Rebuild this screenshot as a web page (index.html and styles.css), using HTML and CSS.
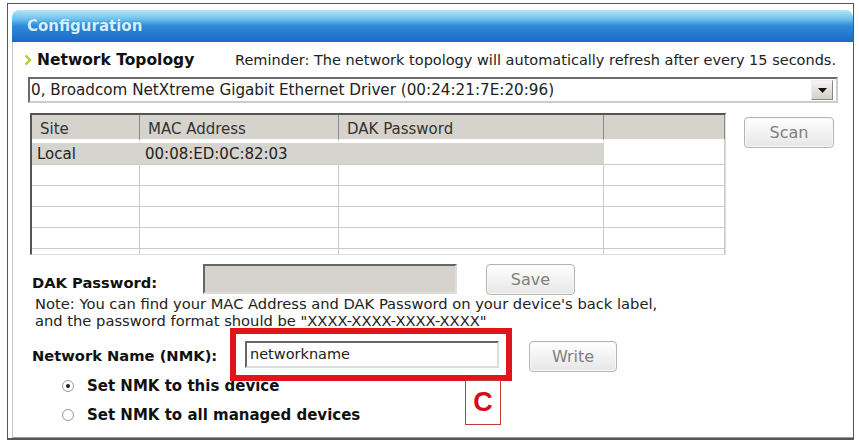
FILE: index.html
```html
<!DOCTYPE html>
<html lang="en">
<head>
    <meta charset="UTF-8">
    <title>Configuration</title>
    <link rel="stylesheet" href="styles.css">
</head>
<body>
<div class="window">
    <div class="titlebar">Configuration</div>
    <div class="panel">
        <div class="topology">
            <h2 class="section">
                <svg width="8" height="12" viewBox="0 0 8 12" class="chevron">
                    <polyline points="1.5,1.5 6,6 1.5,10.5" fill="none" stroke="#b9c935" stroke-width="2.4"/>
                </svg>
                Network Topology
            </h2>
            <span class="reminder">Reminder: The network topology will automatically refresh after every 15 seconds.</span>
        </div>

        <div class="select">
            <span>0, Broadcom NetXtreme Gigabit Ethernet Driver (00:24:21:7E:20:96)</span>
            <span class="select-arrow">
                <svg width="9" height="5" viewBox="0 0 9 5"><polygon points="0,0 9,0 4.5,5" fill="#111"/></svg>
            </span>
        </div>

        <div class="devices">
            <div class="grid">
                <div class="th">Site</div>
                <div class="th">MAC Address</div>
                <div class="th">DAK Password</div>
                <div class="th"></div>

                <div class="td sel">Local</div>
                <div class="td sel">00:08:ED:0C:82:03</div>
                <div class="td sel"></div>
                <div class="td"></div>

                <div class="td"></div><div class="td"></div><div class="td"></div><div class="td"></div>
                <div class="td"></div><div class="td"></div><div class="td"></div><div class="td"></div>
                <div class="td"></div><div class="td"></div><div class="td"></div><div class="td"></div>
                <div class="td"></div><div class="td"></div><div class="td"></div><div class="td"></div>
                <div class="td short"></div><div class="td short"></div><div class="td short"></div><div class="td short"></div>
            </div>
            <button class="btn scan">Scan</button>
        </div>

        <div class="dak-row">
            <label class="field-label">DAK Password:</label>
            <div class="input disabled"></div>
            <button class="btn save">Save</button>
        </div>
        <p class="note">Note: You can find your MAC Address and DAK Password on your device's back label,<br>
            and the password format should be "XXXX-XXXX-XXXX-XXXX"</p>

        <div class="nmk-row">
            <label class="field-label">Network Name (NMK):</label>
            <div class="highlight">
                <div class="input">networkname</div>
                <span class="callout">C</span>
            </div>
            <button class="btn write">Write</button>
        </div>

        <div class="radios">
            <label class="radio"><span class="dot checked"></span>Set NMK to this device</label>
            <label class="radio"><span class="dot"></span>Set NMK to all managed devices</label>
        </div>
    </div>
</div>
</body>
</html>
```

FILE: styles.css
```css
body {
    margin: 0;
    padding: 3px 0 0 7px;
    background: #fff;
    font: 14.5px "DejaVu Sans", sans-serif;
    color: #222;
}

.window {
    box-sizing: border-box;
    width: 847px;
    height: 437px;
    border: 1px solid #555;
    border-bottom-width: 2px;
    padding: 6px 0 0 4px;
    display: flex;
    flex-direction: column;
}

.titlebar {
    height: 32px;
    line-height: 32px;
    padding-left: 15px;
    border-radius: 7px 7px 0 0;
    background: linear-gradient(#b4e6f7 0%, #6fc2ee 28%, #2f8ad8 50%, #1b6ac6 100%);
    color: #d6efff;
    font-weight: bold;
    font-size: 15px;
    text-shadow: 0 0 1px #2b6fb8;
}

.panel {
    flex: 1;
    border-left: 1px solid #c8c8c8;
    border-bottom: 1px solid #999;
    padding: 0 0 0 15px;
    position: relative;
}

.topology {
    display: flex;
    align-items: center;
    height: 35px;
}

.section {
    margin: 0 0 0 -4px;
    display: flex;
    align-items: center;
    gap: 5px;
    font-size: 15.5px;
    width: 211px;
    color: #111;
}

.select {
    box-sizing: border-box;
    width: 810px;
    height: 26px;
    display: flex;
    align-items: center;
    justify-content: space-between;
    border: 2px solid #6a6a6a;
    border-right-color: #ccc;
    border-bottom-color: #ccc;
    padding: 0 3px 0 1px;
    font-size: 15.2px;
}

.select-arrow {
    width: 20px;
    height: 18px;
    display: flex;
    align-items: center;
    justify-content: center;
    background: linear-gradient(#f4f4f4, #d4d0c8);
    border: 1px solid #888;
    border-top-color: #eee;
    border-left-color: #eee;
}

.devices {
    display: flex;
    align-items: flex-start;
    gap: 18px;
    margin: 10px 0 0 2px;
}

.grid {
    display: grid;
    grid-template-columns: 108px 199px 265px 121px;
    grid-template-rows: 26px 24px repeat(4, 21px) 5px;
    border: 2px solid #555;
    border-right: 1px solid #ddd;
    border-bottom: 1px solid #ddd;
    font-size: 15px;
}

.th {
    background: #d6d3cc;
    border-right: 1px solid #8a8a8a;
    border-bottom: 2px solid #fff;
    padding: 5px 0 0 8px;
    color: #333;
}

.th:last-child {
    border-right: none;
}

.td {
    border-right: 1px solid #c9c9c9;
    border-bottom: 1px solid #c9c9c9;
    padding: 2px 0 0 5px;
}

.td.sel {
    background: #d6d4cf;
    border-right-color: #d6d4cf;
    border-top: 2px solid #fff;
}

.td.short {
    border-bottom: none;
}

.btn {
    box-sizing: border-box;
    font: 16px "DejaVu Sans", sans-serif;
    color: #808080;
    background: linear-gradient(#ffffff, #e6e6e6);
    border: 1px solid #b4b4b4;
    border-radius: 4px;
    box-shadow: inset 0 0 0 1px #f8f8f8;
    padding: 0;
}

.scan {
    width: 90px;
    height: 31px;
    margin-top: 4px;
}

.dak-row {
    display: flex;
    align-items: center;
    margin-top: 8px;
    height: 32px;
}

.field-label {
    font-weight: bold;
    font-size: 14.7px;
    color: #111;
    margin-left: 4px;
}

.dak-row .field-label {
    width: 171px;
    margin-top: 6px;
}

.input {
    box-sizing: border-box;
    border: 2px solid #666;
    border-right-color: #ddd;
    border-bottom-color: #ddd;
    background: #fff;
    padding-left: 3px;
}

.input.disabled {
    width: 254px;
    height: 30px;
    background: #d6d3cc;
}

.save {
    width: 89px;
    height: 31px;
    margin-left: 29px;
}

.note {
    margin: 0 0 0 7px;
    line-height: 17px;
    font-size: 14.7px;
    color: #222;
    white-space: nowrap;
}

.nmk-row {
    display: flex;
    align-items: center;
    margin-top: -1px;
}

.nmk-row .field-label {
    width: 198px;
    margin-top: 2px;
}

.highlight {
    position: relative;
    border: 6px solid #e0141b;
    padding: 7px 7px 7px 9px;
    width: 254px;
}

.highlight .input {
    height: 27px;
    line-height: 23px;
    font-size: 14.5px;
}

.callout {
    position: absolute;
    left: 229px;
    top: 100%;
    margin-top: 5px;
    width: 34px;
    height: 43px;
    border: 1px solid #c23a3a;
    color: #d0101a;
    font: bold 27px "Liberation Sans", sans-serif;
    display: flex;
    align-items: center;
    justify-content: center;
}

.write {
    width: 88px;
    height: 31px;
    margin: 4px 0 0 17px;
}

.radios {
    display: flex;
    flex-direction: column;
    gap: 8px;
    margin: -6px 0 0 34px;
}

.radio {
    display: flex;
    align-items: center;
    gap: 13px;
    font-weight: bold;
    font-size: 15px;
    color: #111;
    height: 21px;
}

.dot {
    box-sizing: border-box;
    width: 12px;
    height: 12px;
    border: 1px solid #9a9a9a;
    border-radius: 50%;
    background: #fff;
    display: flex;
    align-items: center;
    justify-content: center;
}

.dot.checked::after {
    content: "";
    width: 4px;
    height: 4px;
    border-radius: 50%;
    background: #222;
}
```
